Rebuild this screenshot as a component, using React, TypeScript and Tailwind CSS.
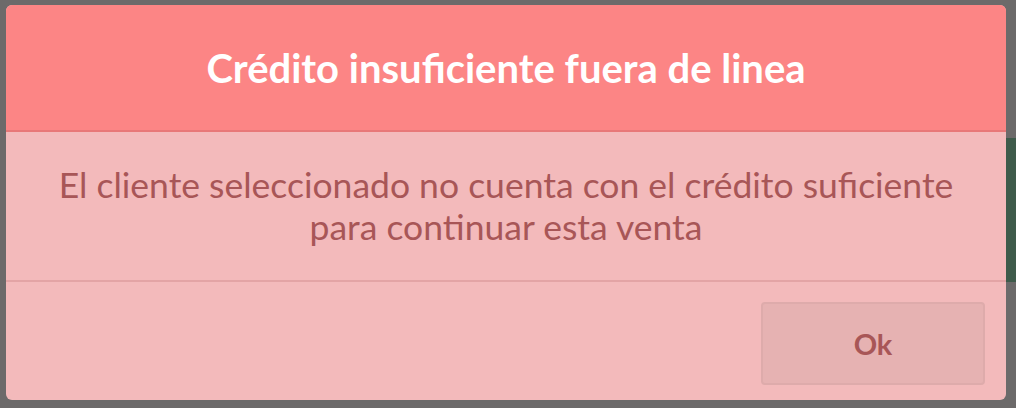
export default function App() {
  return (
    <div className="relative h-[408px] w-[1016px] overflow-hidden bg-[#6c6a6a] font-['Lato',sans-serif]">
      <div className="absolute right-0 top-[138px] h-[144px] w-[20px] bg-[#3e5b4b]" />
      <div className="absolute left-[6px] top-[5px] flex w-[1000px] flex-col overflow-hidden rounded-[6px] bg-[#f3babb]">
        <div className="flex h-[127px] items-center justify-center border-b-2 border-[#e87878] bg-[#fc8585]">
          <h2 className="text-[40px] font-bold text-white">Crédito insuficiente fuera de linea</h2>
        </div>
        <div className="flex h-[150px] items-center justify-center border-b-2 border-[#e3a4a5] px-4 text-center">
          <p className="text-[35.5px] leading-[42px] text-[#a85657]">
            El cliente seleccionado no cuenta con el crédito suficiente
            <br />
            para continuar esta venta
          </p>
        </div>
        <div className="flex h-[118px] items-start justify-end px-[21px] pt-[20px]">
          <button
            type="button"
            className="h-[83px] w-[224px] rounded-[4px] border-2 border-[#deabab] bg-[#e6b2b2] text-[29px] font-bold text-[#a85657]"
          >
            Ok
          </button>
        </div>
      </div>
    </div>
  );
}
